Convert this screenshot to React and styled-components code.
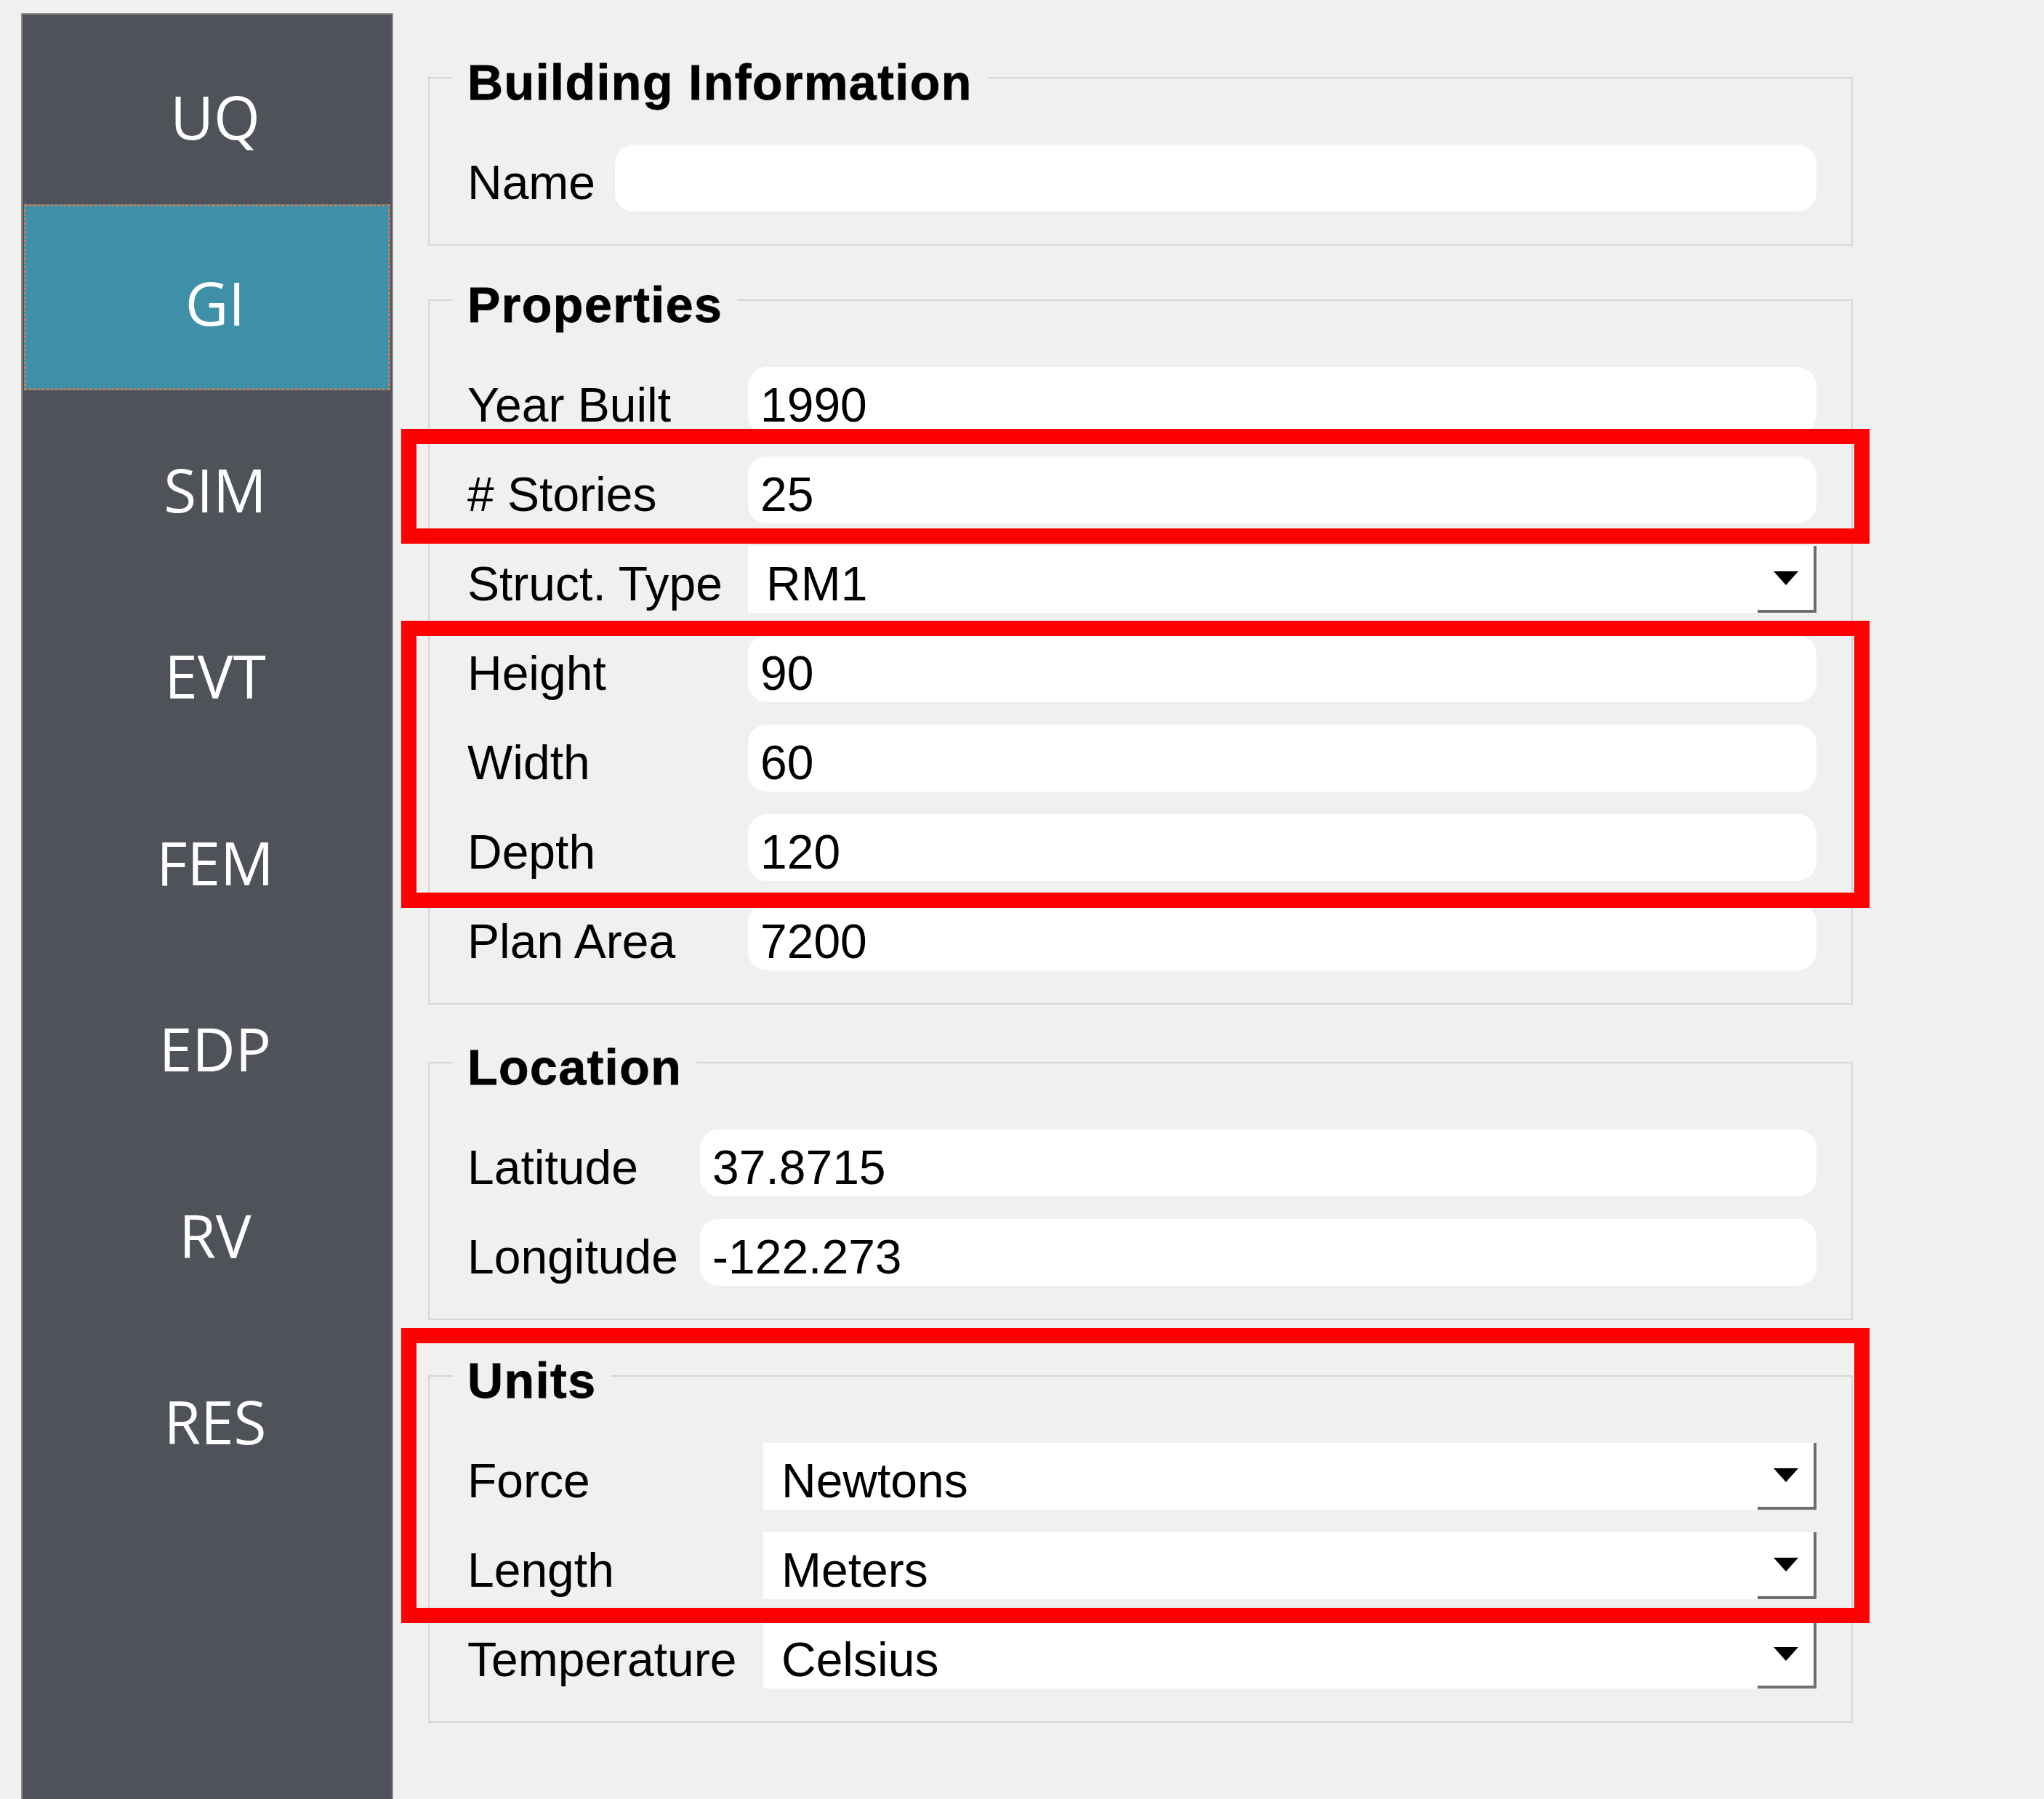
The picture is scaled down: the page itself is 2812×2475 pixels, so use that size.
import React from 'react';
import styled, { createGlobalStyle } from 'styled-components';

const GlobalStyle = createGlobalStyle`
  html, body {
    margin: 0;
    padding: 0;
    background: #f0f0f0;
  }
  body {
    font-family: "Liberation Sans", Arial, sans-serif;
  }
`;

const Page = styled.div`
  display: flex;
  gap: 48px;
  box-sizing: border-box;
  width: 2812px;
  height: 2475px;
  padding: 18px 0 0 29px;
  background: #f0f0f0;
  overflow: hidden;
`;

const Sidebar = styled.nav`
  flex-shrink: 0;
  width: 512px;
  box-sizing: border-box;
  display: flex;
  flex-direction: column;
  padding: 4px 2px 0;
  background: #4f5259;
  border: 2px solid #8b8d92;
  border-bottom: none;
`;

const NavItem = styled.div`
  height: 256.5px;
  box-sizing: border-box;
  display: flex;
  align-items: center;
  justify-content: center;
  padding: 15px 0 0 22px;
  font-family: "Open Sans", "Liberation Sans", sans-serif;
  font-size: 82px;
  color: #ffffff;
  background: ${p => (p.$active ? '#3e90a8' : 'transparent')};
  outline: ${p => (p.$active ? '3px dotted #d9774f' : 'none')};
  outline-offset: -3px;
`;

const Main = styled.main`
  position: relative;
  width: 1960px;
  padding-top: 49px;
  display: flex;
  flex-direction: column;
`;

const GroupBox = styled.fieldset`
  margin: ${p => p.$space}px 0 0;
  padding: 0;
  min-width: 0;
  border: 2px solid #d6d6d6;
`;

const GroupTitle = styled.legend`
  margin-left: 32px;
  padding: 12px 20px 0;
  font-size: 68px;
  line-height: 68px;
  font-weight: bold;
  letter-spacing: 1.5px;
  -webkit-text-stroke: 0.8px #000;
  color: #000;
`;

const Form = styled.div`
  display: grid;
  grid-template-columns: ${p => p.$labelWidth}px 1fr;
  row-gap: 31px;
  padding: 52px 48px 45px 52px;
`;

const Label = styled.label`
  height: 92px;
  box-sizing: border-box;
  padding-top: 12px;
  font-size: 66px;
  line-height: 80px;
  color: #000;
  white-space: nowrap;
`;

const TextField = styled.input`
  width: 100%;
  height: 92px;
  box-sizing: border-box;
  margin: 0;
  padding: 12px 20px 0 17px;
  border: none;
  border-radius: 26px;
  background: #ffffff;
  font-family: inherit;
  font-size: 66px;
  line-height: 80px;
  color: #000;
  outline: none;
`;

const Combo = styled.div`
  display: flex;
  height: 92px;
  background: #ffffff;
`;

const ComboValue = styled.span`
  flex: 1;
  padding: 12px 0 0 25px;
  font-size: 66px;
  line-height: 80px;
  color: #000;
  white-space: nowrap;
`;

const DropButton = styled.span`
  width: 81px;
  box-sizing: border-box;
  display: flex;
  align-items: center;
  justify-content: center;
  border-right: 4px solid #6e6e6e;
  border-bottom: 4px solid #6e6e6e;
`;

const Arrow = styled.span`
  width: 0;
  height: 0;
  border-left: 17px solid transparent;
  border-right: 17px solid transparent;
  border-top: 19px solid #000;
`;

// red markers drawn over the form
const Annotation = styled.div`
  position: absolute;
  left: -37px;
  width: 2020px;
  top: ${p => p.$top}px;
  height: ${p => p.$height}px;
  box-sizing: border-box;
  border: 21px solid #ff0000;
  pointer-events: none;
`;

const navItems = ['UQ', 'GI', 'SIM', 'EVT', 'FEM', 'EDP', 'RV', 'RES'];

const groups = [
  {
    title: 'Building Information',
    space: 0,
    labelWidth: 203,
    rows: [{ label: 'Name', value: '' }],
  },
  {
    title: 'Properties',
    space: 35,
    labelWidth: 386,
    rows: [
      { label: 'Year Built', value: '1990' },
      { label: '# Stories', value: '25' },
      { label: 'Struct. Type', value: 'RM1', combo: true },
      { label: 'Height', value: '90' },
      { label: 'Width', value: '60' },
      { label: 'Depth', value: '120' },
      { label: 'Plan Area', value: '7200' },
    ],
  },
  {
    title: 'Location',
    space: 40,
    labelWidth: 320,
    rows: [
      { label: 'Latitude', value: '37.8715' },
      { label: 'Longitude', value: '-122.273' },
    ],
  },
  {
    title: 'Units',
    space: 37,
    labelWidth: 407,
    rows: [
      { label: 'Force', value: 'Newtons', combo: true },
      { label: 'Length', value: 'Meters', combo: true },
      { label: 'Temperature', value: 'Celsius', combo: true },
    ],
  },
];

const marks = [
  { top: 572, height: 158 },
  { top: 836, height: 395 },
  { top: 1809, height: 406 },
];

const App = () => {
  return (
    <>
      <GlobalStyle />
      <Page>
        <Sidebar>
          {navItems.map(item => (
            <NavItem key={item} $active={item === 'GI'}>
              {item}
            </NavItem>
          ))}
        </Sidebar>

        <Main>
          {groups.map(group => (
            <GroupBox key={group.title} $space={group.space}>
              <GroupTitle>{group.title}</GroupTitle>
              <Form $labelWidth={group.labelWidth}>
                {group.rows.map(row => (
                  <React.Fragment key={row.label}>
                    <Label>{row.label}</Label>
                    {row.combo ? (
                      <Combo>
                        <ComboValue>{row.value}</ComboValue>
                        <DropButton>
                          <Arrow />
                        </DropButton>
                      </Combo>
                    ) : (
                      <TextField readOnly value={row.value} />
                    )}
                  </React.Fragment>
                ))}
              </Form>
            </GroupBox>
          ))}

          {marks.map(m => (
            <Annotation key={m.top} $top={m.top} $height={m.height} />
          ))}
        </Main>
      </Page>
    </>
  );
};

export default App;
